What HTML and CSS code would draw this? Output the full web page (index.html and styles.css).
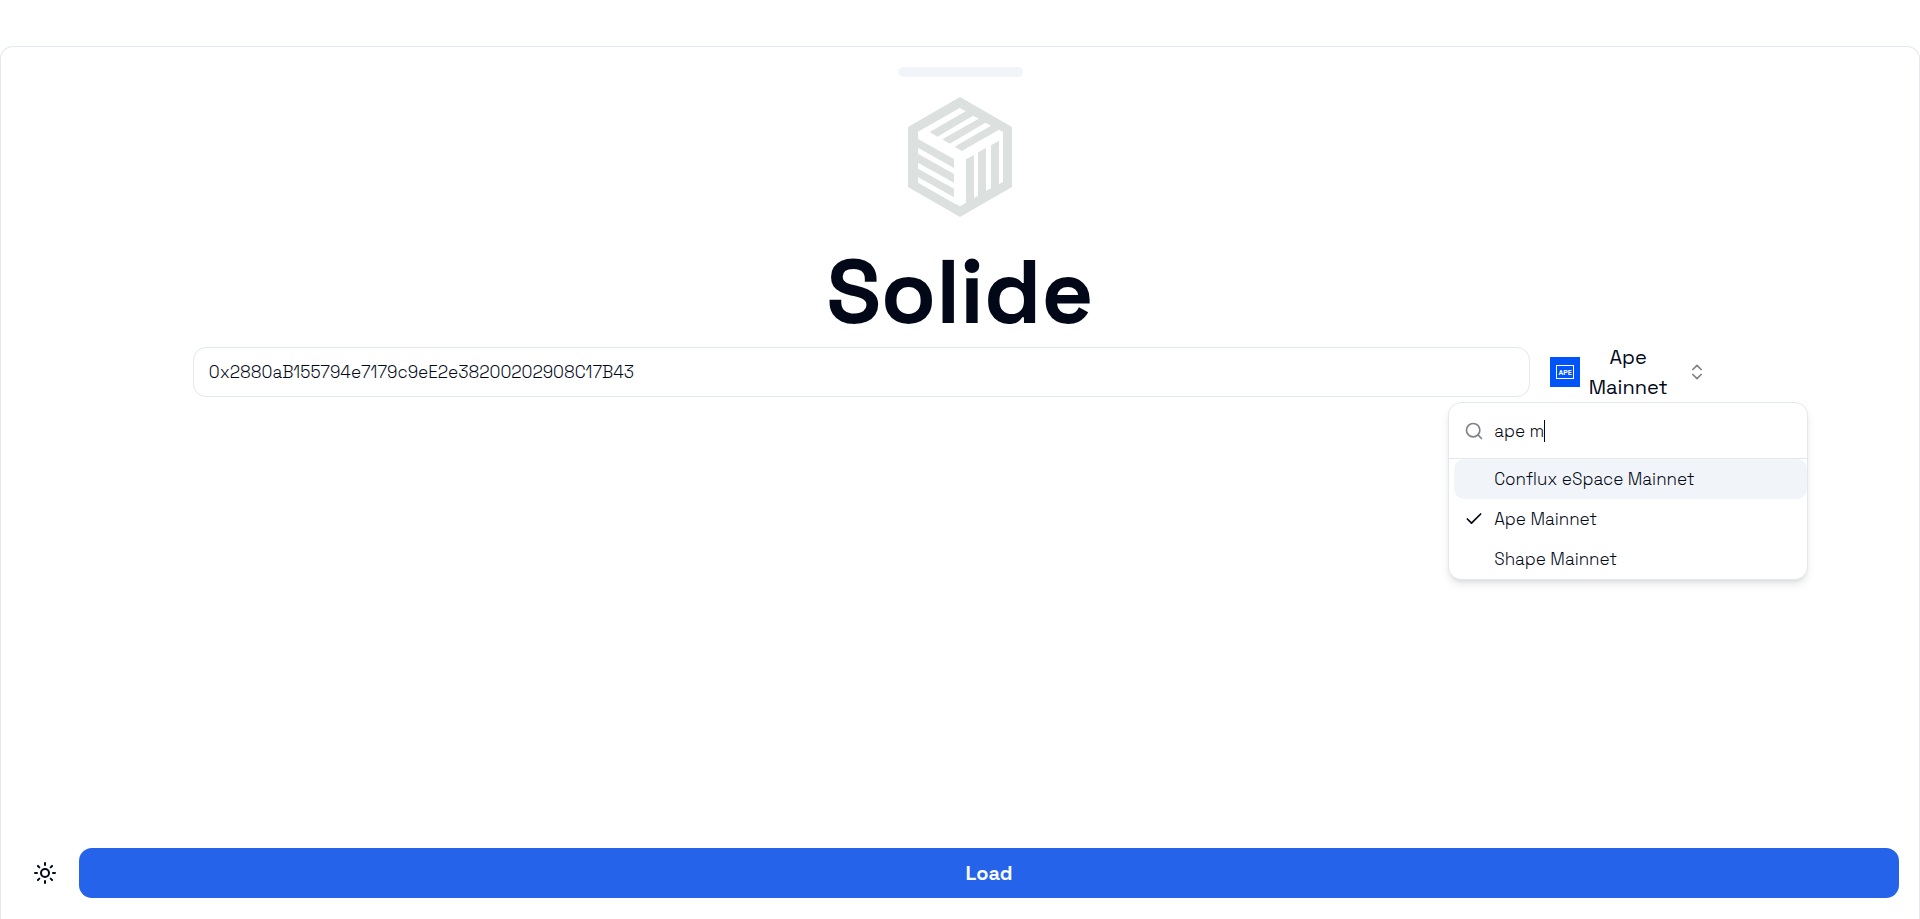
FILE: index.html
```html
<!DOCTYPE html>
<html lang="en">
<head>
<meta charset="utf-8">
<meta name="viewport" content="width=device-width, initial-scale=1">
<title>Solide</title>
<link rel="stylesheet" href="styles.css">
</head>
<body>
<main class="drawer">
  <div class="handle"></div>
  <svg class="logo" viewBox="60 171 360 360" aria-hidden="true">
    <path class="logo-face" d="M240 171 396 261V441L240 531 84 441V261Z"/>
    <path class="logo-cut" d="M114 275 239 204 257 214 149 276 172 290 279 227 296 236 187 298 209 311 316 248 333 257 224 320 245 333 357 269 369 276V426L357 433V302L333 316V445L318 453V324L294 337V467L282 474V345L258 358V488L240 499 222 490 114 428V411L222 472V446L114 386V368L222 428V402L114 341V323L222 384V357L114 297Z"/>
  </svg>
  <h1 class="title">Solide</h1>
  <form class="search-row">
    <input class="address" type="text" aria-label="Contract address" value="0x2880aB155794e7179c9eE2e38200202908C17B43">
    <div class="network">
      <button class="network-button" type="button" aria-expanded="true">
        <svg class="network-icon" viewBox="0 0 30 30" aria-hidden="true">
          <rect width="30" height="30" fill="#0054fa"/>
          <rect x="6.5" y="8.5" width="17" height="13" fill="none" stroke="#fff"/>
          <text class="network-mark" x="15" y="18" text-anchor="middle">APE</text>
        </svg>
        <span class="network-name">Ape Mainnet</span>
        <svg class="icon icon-faded" viewBox="0 0 24 24" aria-hidden="true"><path d="m7 15 5 5 5-5M7 9l5-5 5 5"/></svg>
      </button>
      <div class="popover">
        <div class="filter">
          <svg class="icon icon-faded" viewBox="0 0 24 24" aria-hidden="true"><circle cx="11" cy="11" r="8"/><path d="m21 21-4.3-4.3"/></svg>
          <input class="filter-input" type="text" aria-label="Search network" value="ape m"><span class="caret"></span>
        </div>
        <div class="options" role="listbox" aria-label="Networks">
          <button class="option option-active" type="button" role="option"><span class="option-mark"></span>Conflux eSpace Mainnet</button>
          <button class="option" type="button" role="option" aria-selected="true"><span class="option-mark"><svg class="icon" viewBox="0 0 24 24" aria-hidden="true"><path d="M20 6 9 17l-5-5"/></svg></span>Ape Mainnet</button>
          <button class="option" type="button" role="option"><span class="option-mark"></span>Shape Mainnet</button>
        </div>
      </div>
    </div>
  </form>
  <footer class="footer">
    <button class="theme-button" type="button" aria-label="Toggle theme">
      <svg class="icon-sun" viewBox="0 0 24 24" aria-hidden="true"><circle cx="12" cy="12" r="4"/><path d="M12 2v2M12 20v2M4.93 4.93l1.41 1.41M17.66 17.66l1.41 1.41M2 12h2M20 12h2M6.34 17.66l-1.41 1.41M19.07 4.93l-1.41 1.41"/></svg>
    </button>
    <button class="load-button" type="button">Load</button>
  </footer>
</main>
</body>
</html>
```
FILE: styles.css
```css
* {
  box-sizing: border-box;
}

body {
  margin: 0;
  min-height: 100vh;
  display: flex;
  flex-direction: column;
  padding-top: 46px;
  background: #fff;
  color: #020817;
  font-family: "Space Grotesk", Inter, "Liberation Sans", sans-serif;
  font-size: 17px;
  font-weight: 300;
}

button,
input {
  font: inherit;
  color: inherit;
  margin: 0;
  padding: 0;
  border: 0;
  background: none;
}

.drawer {
  flex: 1;
  display: flex;
  flex-direction: column;
  align-items: center;
  border: 1px solid #e2e8f0;
  border-bottom: 0;
  border-radius: 13px 13px 0 0;
}

.handle {
  width: 125px;
  height: 10px;
  margin-top: 20px;
  border-radius: 5px;
  background: #f1f5f9;
}

.logo {
  width: 120px;
  height: 120px;
  margin-top: 20px;
}

.logo-face {
  fill: #dce0df;
}

.logo-cut {
  fill: #fff;
}

.title {
  margin: 30px 0 10px;
  font-size: 90px;
  line-height: 90px;
  font-weight: 600;
}

.search-row {
  width: 80%;
  display: flex;
}

.address {
  flex: 1;
  min-width: 0;
  height: 50px;
  padding: 0 15px;
  border: 1px solid #e2e8f0;
  border-radius: 13px;
}

.network {
  position: relative;
}

.network-button {
  display: flex;
  align-items: center;
  justify-content: space-between;
  width: 197px;
  height: 50px;
  padding: 0 20px;
  font-size: 20px;
  line-height: 30px;
  font-weight: 400;
}

.network-icon {
  width: 30px;
  height: 30px;
  margin-right: 8px;
}

.network-mark {
  fill: #fff;
  font: bold 7px Roboto, sans-serif;
}

.network-name {
  width: 80px;
  margin-right: auto;
}

.icon {
  flex: none;
  width: 20px;
  height: 20px;
  fill: none;
  stroke: currentColor;
  stroke-width: 2;
  stroke-linecap: round;
  stroke-linejoin: round;
}

.icon-faded {
  opacity: 0.5;
}

.popover {
  position: absolute;
  top: 55px;
  right: -81px;
  width: 360px;
  overflow: hidden;
  border: 1px solid #e2e8f0;
  border-radius: 13px;
  background: #fff;
  box-shadow: 0 5px 8px -1px rgb(0 0 0 / 0.1), 0 3px 5px -3px rgb(0 0 0 / 0.1);
}

.filter {
  display: flex;
  align-items: center;
  height: 56px;
  padding: 0 15px;
  border-bottom: 1px solid #e2e8f0;
}

.filter-input {
  field-sizing: content;
  margin-left: 10px;
  outline: 0;
}

.caret {
  width: 1px;
  height: 22px;
  background: #020817;
}

.options {
  padding-left: 5px;
}

.option {
  display: flex;
  align-items: center;
  width: 100%;
  height: 40px;
  padding: 0 10px;
  border-radius: 10px;
  color: #020817;
}

.option-active {
  background: #f1f5f9;
}

.option-mark {
  display: flex;
  width: 20px;
  margin-right: 10px;
}

.footer {
  display: flex;
  align-self: stretch;
  gap: 10px;
  margin-top: auto;
  padding: 20px 20px 21px;
}

.theme-button {
  display: flex;
  align-items: center;
  justify-content: center;
  width: 48px;
  height: 50px;
}

.icon-sun {
  width: 24px;
  height: 24px;
  fill: none;
  stroke: currentColor;
  stroke-width: 2;
  stroke-linecap: round;
}

.load-button {
  flex: 1;
  height: 50px;
  border-radius: 13px;
  background: #2563eb;
  color: #f8fafc;
  font-size: 20px;
  font-weight: 600;
}
```
